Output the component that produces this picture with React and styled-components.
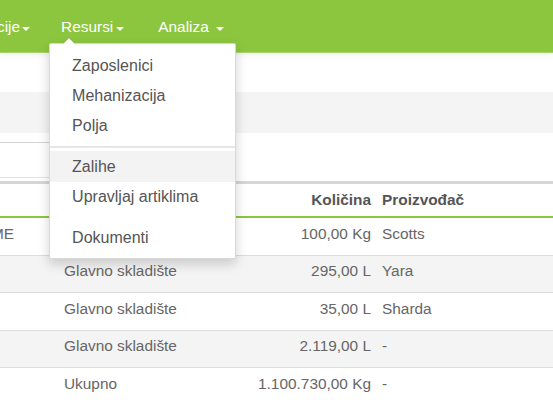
import React from "react";
import styled, { createGlobalStyle } from "styled-components";

const GlobalStyle = createGlobalStyle`
  html, body { margin: 0; padding: 0; background: #fff; overflow: hidden; }
  body { font-family: "Liberation Sans", Arial, Helvetica, sans-serif; }
  * { box-sizing: border-box; }
`;

const GREEN = "#8cc63f";

const Page = styled.div`
  width: 100%;
  position: relative;
`;

const Navbar = styled.nav`
  position: relative;
  z-index: 5;
  height: 53px;
  background: ${GREEN};
  border-bottom: 1px solid #a6d46c;
  box-shadow: 0 2px 6px rgba(0, 0, 0, 0.07);
  display: flex;
  align-items: stretch;
`;

const NavItem = styled.div`
  position: relative;
  display: flex;
  align-items: center;
`;

const NavLink = styled.a`
  display: flex;
  align-items: center;
  color: #fff;
  font-size: 15.4px;
  line-height: 20px;
  padding: 2px ${(p) => p.$pr}px 0 ${(p) => p.$pl}px;
  text-indent: ${(p) => p.$indent || 0}px;
  white-space: nowrap;
  cursor: pointer;
`;

const Caret = styled.span`
  display: inline-block;
  width: 0;
  height: 0;
  margin-left: ${(p) => p.$gap}px;
  margin-top: 3px;
  border-top: 4px solid #fff;
  border-left: 4px solid transparent;
  border-right: 4px solid transparent;
`;

const Dropdown = styled.div`
  position: absolute;
  top: 43px;
  left: 3px;
  width: 187px;
  background: #fff;
  border: 1px solid rgba(0, 0, 0, 0.15);
  border-radius: 2px;
  box-shadow: 0 5px 12px rgba(0, 0, 0, 0.18);
  padding: 7px 0 5px;
  display: flex;
  flex-direction: column;
  &::before {
    content: "";
    position: absolute;
    top: -7px;
    left: 12px;
    border-left: 7px solid transparent;
    border-right: 7px solid transparent;
    border-bottom: 7px solid rgba(0, 0, 0, 0.12);
  }
  &::after {
    content: "";
    position: absolute;
    top: -6px;
    left: 13px;
    border-left: 6px solid transparent;
    border-right: 6px solid transparent;
    border-bottom: 6px solid #fff;
  }
`;

const MenuItem = styled.a`
  display: block;
  padding: ${(p) => (p.$active ? "5.5px 22px" : "5px 22px")};
  line-height: 20px;
  font-size: 16px;
  color: #555;
  white-space: nowrap;
  background: ${(p) => (p.$active ? "#f3f3f3" : "transparent")};
`;

const Divider = styled.div`
  height: 2px;
  margin: ${(p) => p.$margin};
  background: ${(p) => (p.$hidden ? "transparent" : "#e6e6e6")};
`;

const TopSpace = styled.div`
  height: 39px;
  background: #fff;
`;

const Band = styled.div`
  height: 41px;
  background: #f4f4f4;
`;

const FilterArea = styled.div`
  padding: 9px 0 3px;
  background: #fff;
`;

const SearchInput = styled.input`
  display: block;
  width: 220px;
  height: 36px;
  margin-left: -10px;
  border: 1px solid #d2d2d2;
  border-bottom-color: #e2e2e2;
  border-radius: 3px;
  background: #fff;
  font-family: inherit;
  font-size: 15px;
  outline: none;
`;

const Table = styled.div`
  border-top: 3px solid #d6d6d6;
`;

const Row = styled.div`
  display: grid;
  grid-template-columns: 56px 180px 140px 1fr;
  background: ${(p) => (p.$striped ? "#f4f4f4" : "#fff")};
  border-bottom: ${(p) => (p.$head ? `2px solid ${GREEN}` : p.$last ? "none" : "1px solid #dcdcdc")};
`;

const Cell = styled.div`
  padding: ${(p) => (p.$head ? "4.5px 8px 5.5px" : "4.5px 8px 10px")};
  padding-left: ${(p) => (p.$first ? 0 : p.$right ? 8 : p.$last ? 6 : 8)}px;
  padding-right: ${(p) => (p.$right ? 5 : 8)}px;
  line-height: 22px;
  font-size: 15.4px;
  font-weight: ${(p) => (p.$head ? "bold" : "normal")};
  color: ${(p) => (p.$head ? "#555" : "#666")};
  text-align: ${(p) => (p.$right ? "right" : "left")};
  text-indent: ${(p) => (p.$first ? -9 : 0)}px;
  white-space: nowrap;
  overflow: hidden;
`;

const rows = [
  { name: "ME", place: "Glavno skladište", qty: "100,00 Kg", maker: "Scotts" },
  { name: "", place: "Glavno skladište", qty: "295,00 L", maker: "Yara" },
  { name: "", place: "Glavno skladište", qty: "35,00 L", maker: "Sharda" },
  { name: "", place: "Glavno skladište", qty: "2.119,00 L", maker: "-" },
  { name: "", place: "Ukupno", qty: "1.100.730,00 Kg", maker: "-" },
];

export default function App() {
  return (
    <Page>
      <GlobalStyle />
      <Navbar>
        <NavItem>
          <NavLink $pl={0} $pr={16} $indent={-3}>
            cije<Caret $gap={2} />
          </NavLink>
        </NavItem>
        <NavItem>
          <NavLink $pl={15} $pr={17}>
            Resursi<Caret $gap={3} />
          </NavLink>
          <Dropdown>
            <MenuItem>Zaposlenici</MenuItem>
            <MenuItem>Mehanizacija</MenuItem>
            <MenuItem>Polja</MenuItem>
            <Divider $margin="5px 0 3px" />
            <MenuItem $active>Zalihe</MenuItem>
            <MenuItem>Upravljaj artiklima</MenuItem>
            <Divider $hidden $margin="5px 0 4px" />
            <MenuItem>Dokumenti</MenuItem>
          </Dropdown>
        </NavItem>
        <NavItem>
          <NavLink $pl={17} $pr={16}>
            Analiza<Caret $gap={7} />
          </NavLink>
        </NavItem>
      </Navbar>
      <TopSpace />
      <Band />
      <FilterArea>
        <SearchInput type="text" />
      </FilterArea>
      <Table>
        <Row $head>
          <Cell $head $first></Cell>
          <Cell $head>Skladište</Cell>
          <Cell $head $right>Količina</Cell>
          <Cell $head $last>Proizvođač</Cell>
        </Row>
        {rows.map((r, i) => (
          <Row key={i} $striped={i % 2 === 1} $last={i === rows.length - 1}>
            <Cell $first>{r.name}</Cell>
            <Cell>{r.place}</Cell>
            <Cell $right>{r.qty}</Cell>
            <Cell $last>{r.maker}</Cell>
          </Row>
        ))}
      </Table>
    </Page>
  );
}
